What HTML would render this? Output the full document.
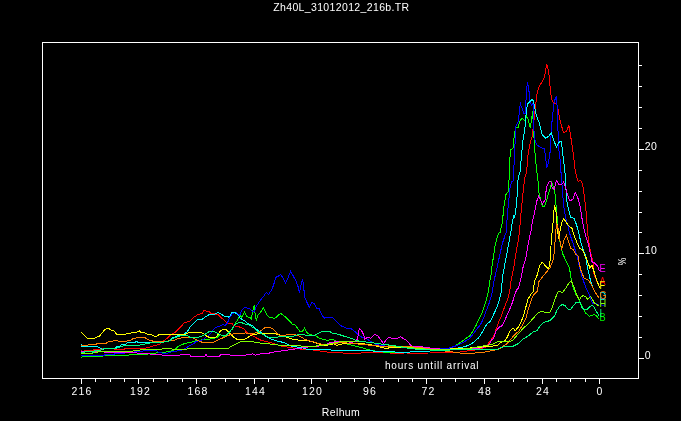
<!DOCTYPE html>
<html><head><meta charset="utf-8"><title>Zh40L_31012012_216b.TR</title>
<style>
html,body{margin:0;padding:0;background:#000;overflow:hidden}
body{width:681px;height:421px}
svg{display:block;will-change:transform}
text{font-family:"Liberation Sans",sans-serif;fill:#fff}
.ax{stroke:#fff;stroke-width:1;fill:none;shape-rendering:crispEdges}
.cv{fill:none;stroke-width:1;shape-rendering:crispEdges;stroke-linejoin:miter}
.t{font-size:10.5px;letter-spacing:0.36px}
.n{font-size:10.5px;letter-spacing:1.15px}
.s{font-size:10px;letter-spacing:0.8px}
.lb{font-size:10.5px}
</style></head>
<body>
<svg width="681" height="421" viewBox="0 0 681 421">
<path class="ax" d="M42.5 42.5H638.5V378.5H42.5Z"/>
<path class="ax" d="M639 358.5h5M639 337.5h3M639 316.5h3M639 295.5h3M639 274.5h3M639 253.5h5M639 232.5h3M639 212.5h3M639 191.5h3M639 170.5h3M639 149.5h5M639 128.5h3M639 107.5h3M639 86.5h3M639 65.5h3"/>
<path class="ax" d="M81.5 379v5M95.5 379v3M110.5 379v3M124.5 379v3M138.5 379v5M153.5 379v3M167.5 379v3M182.5 379v3M196.5 379v5M210.5 379v3M225.5 379v3M239.5 379v3M254.5 379v5M268.5 379v3M282.5 379v3M297.5 379v3M311.5 379v5M326.5 379v3M340.5 379v3M354.5 379v3M369.5 379v5M383.5 379v3M398.5 379v3M412.5 379v3M426.5 379v5M441.5 379v3M455.5 379v3M470.5 379v3M484.5 379v5M498.5 379v3M513.5 379v3M527.5 379v3M542.5 379v5M556.5 379v3M570.5 379v3M585.5 379v3M599.5 379v5"/>
<polyline class="cv" stroke="#ff0000" points="81.0,350.5 83.0,351.5 85.0,350.5 92.0,350.5 95.0,349.5 100.0,349.5 104.0,348.5 107.0,348.5 114.0,349.0 121.0,349.0 123.0,349.5 126.0,348.5 133.0,349.0 140.0,348.5 144.4,348.4 150.0,347.0 155.8,345.3 160.0,344.0 162.8,341.3 167.1,338.5 171.4,334.2 175.7,332.0 179.9,327.8 184.2,322.8 189.9,321.1 194.2,317.1 198.5,314.2 202.0,313.8 203.9,310.3 206.3,311.1 208.5,311.1 211.3,313.8 214.8,313.8 218.4,315.0 221.3,317.8 224.1,319.9 227.0,323.1 231.9,323.5 234.1,325.9 237.6,326.4 241.9,327.8 244.0,328.9 246.8,332.5 251.1,334.6 255.4,337.5 261.1,340.3 266.8,341.7 272.5,343.2 281.0,346.0 289.6,347.4 298.1,348.9 306.7,349.3 315.2,350.3 323.8,351.7 334.0,352.7 336.5,352.4 349.4,353.6 359.3,353.6 362.2,352.4 385.0,352.4 395.0,353.6 402.0,353.6 404.9,352.4 409.2,353.6 418.0,353.1 430.0,353.0 445.0,352.5 460.0,352.0 475.0,350.0 482.0,348.5 486.0,347.0 488.9,342.5 491.8,338.9 494.6,334.6 496.0,329.6 497.5,325.4 498.9,321.1 501.0,316.8 504.5,307.1 507.3,300.0 509.5,292.8 510.9,281.9 513.7,267.6 515.9,253.4 518.0,242.0 519.4,232.0 520.9,214.7 522.3,200.5 523.7,186.2 525.1,176.3 526.6,172.0 528.0,154.7 530.1,143.3 532.3,136.2 533.0,129.1 534.4,116.0 535.8,104.4 537.3,91.6 539.4,85.9 542.2,81.6 544.4,77.4 545.8,68.8 546.8,64.3 547.9,68.8 549.4,77.4 550.1,87.3 551.5,98.7 553.6,103.0 555.8,103.0 557.5,105.9 558.6,113.0 560.7,122.8 563.5,132.7 566.4,131.3 568.9,125.3 570.2,132.7 571.6,142.7 572.8,150.0 574.2,161.7 574.9,168.8 576.3,175.9 578.2,181.6 580.6,180.2 582.0,183.0 583.4,188.7 584.4,197.3 585.6,206.0 586.7,218.5 587.3,228.5 588.4,239.9 589.9,248.4 591.3,255.6 592.7,260.0 594.1,274.5 597.0,281.6 599.3,284.5"/>
<polyline class="cv" stroke="#00ff00" points="81.0,357.5 83.0,356.5 102.0,356.5 104.0,355.5 126.0,355.5 133.0,354.3 144.4,354.8 151.5,353.4 160.0,352.7 165.7,352.0 170.0,351.3 174.2,349.9 178.5,346.3 184.9,343.4 190.6,342.5 196.0,340.5 203.3,339.8 206.5,339.8 209.7,339.0 213.8,338.2 217.0,337.4 219.0,335.4 220.2,334.2 221.8,335.4 224.3,336.6 226.7,336.2 229.1,332.2 231.5,330.5 233.2,327.3 234.4,324.9 236.4,321.7 238.0,319.2 239.8,315.0 241.7,317.6 244.3,312.1 247.1,316.8 250.0,317.6 251.4,319.0 252.5,311.9 254.2,305.0 255.4,316.1 256.4,320.4 257.8,315.4 259.9,313.3 263.5,307.6 266.4,314.0 269.2,317.3 274.9,318.3 280.6,313.3 285.3,316.8 289.6,321.1 292.4,324.2 295.3,325.1 299.6,331.1 302.4,331.4 304.5,328.2 306.7,332.5 309.5,334.6 315.2,335.6 319.5,338.2 323.8,339.6 328.0,340.3 332.3,339.3 336.5,341.3 342.2,342.5 349.4,344.6 356.5,346.5 363.6,348.2 370.7,350.3 379.3,351.7 387.8,352.4 399.2,352.4 407.8,352.1 418.0,351.7 430.0,351.0 440.0,350.0 446.2,348.9 454.7,346.0 460.4,342.5 466.1,338.2 469.7,336.0 473.3,330.4 476.1,325.4 479.0,319.0 481.8,313.3 483.9,307.6 486.7,298.5 488.5,291.0 489.5,283.3 491.0,274.7 492.4,263.3 493.8,254.8 495.2,244.8 497.4,236.3 499.5,232.0 500.2,232.0 502.4,221.9 503.8,207.6 505.9,194.8 508.1,191.9 509.0,180.5 509.5,172.0 509.5,161.9 510.9,149.7 513.0,148.3 513.7,140.5 514.5,133.4 515.9,127.7 518.0,127.7 520.2,120.5 522.3,118.4 525.1,121.3 526.6,116.3 528.0,119.1 530.1,127.7 531.6,120.5 532.5,111.0 533.7,129.1 534.1,140.5 535.1,154.7 536.5,169.0 538.0,180.5 538.7,191.9 540.8,200.5 542.2,206.2 544.4,206.9 546.5,200.5 548.6,193.4 550.8,186.2 551.5,181.3 553.6,187.7 555.1,194.8 556.1,206.2 556.9,214.7 557.9,226.1 558.3,232.8 559.9,241.3 561.4,248.4 562.8,254.1 564.9,258.4 566.4,261.7 569.2,267.4 570.6,274.5 571.3,280.9 573.5,288.1 575.8,294.3 578.4,298.6 580.5,302.8 582.7,308.0 585.7,313.1 589.1,316.1 592.1,315.7 594.2,314.4 596.8,316.1 599.3,319.5"/>
<polyline class="cv" stroke="#0000ff" points="81.0,355.5 104.0,355.5 105.0,354.5 114.0,354.5 115.0,353.5 125.0,353.0 143.0,351.0 155.8,350.3 158.6,352.5 166.0,353.5 171.4,352.0 177.0,351.0 182.8,349.9 188.5,346.3 194.2,343.4 196.0,341.4 200.0,340.5 203.3,339.8 205.7,337.4 208.9,335.4 212.2,331.3 214.6,328.1 217.8,326.5 220.2,326.1 222.7,324.5 225.1,325.3 227.1,323.3 228.3,320.8 229.5,318.4 230.7,316.0 232.6,313.5 234.8,312.1 237.6,313.5 239.0,315.7 240.0,314.7 241.4,310.4 244.3,307.6 249.3,308.3 252.8,311.9 254.2,311.9 256.4,306.2 260.7,299.7 264.2,295.5 266.4,292.2 268.5,294.5 271.3,290.5 273.5,285.5 275.6,277.4 278.5,276.0 280.6,274.5 282.7,277.7 285.6,282.7 288.4,277.0 290.6,271.3 292.7,274.8 296.3,281.9 298.4,287.6 299.5,293.3 301.3,283.4 302.7,279.4 303.7,287.6 304.8,297.6 307.0,302.6 309.4,307.3 311.9,302.6 314.1,303.3 316.9,308.3 319.1,308.7 321.9,314.7 324.0,318.3 325.5,317.3 332.3,317.5 336.5,321.8 341.5,326.1 346.5,328.2 350.8,328.5 354.4,331.1 357.9,334.2 362.2,337.5 366.5,338.9 370.7,341.3 376.4,344.6 385.0,346.0 393.5,346.5 402.1,346.5 410.6,346.7 418.0,348.2 430.0,349.0 440.0,349.0 449.0,348.2 457.6,345.3 463.3,342.5 469.0,338.9 473.3,333.9 477.5,328.2 480.3,324.9 483.1,319.2 486.0,311.4 488.8,304.2 491.0,297.1 492.4,291.0 493.8,281.9 496.7,269.0 499.5,256.2 502.4,243.4 505.2,234.8 506.4,232.0 507.3,214.7 508.8,200.5 510.2,186.2 511.6,182.0 513.3,180.5 513.7,172.0 514.5,154.7 515.2,140.5 515.9,126.2 518.0,122.0 519.4,112.0 519.4,108.7 520.4,103.7 521.6,107.3 523.7,113.0 525.1,113.0 526.1,98.7 526.6,90.2 527.3,82.4 528.4,86.6 529.4,94.5 530.1,101.6 531.6,105.1 533.0,103.0 533.7,116.0 533.7,126.2 534.4,137.6 536.5,144.8 540.1,146.9 544.4,149.0 545.8,159.0 546.8,167.6 548.6,161.9 550.1,151.9 550.8,140.5 551.5,126.2 552.8,114.2 554.2,101.4 556.4,96.4 557.1,105.7 557.8,125.6 558.8,150.0 559.9,157.4 560.7,168.8 561.7,180.2 562.5,191.6 563.6,206.0 565.6,217.1 567.8,225.6 569.9,234.2 572.8,242.7 575.6,251.3 577.3,257.0 579.2,266.0 581.3,274.5 584.2,283.1 587.0,290.2 589.5,295.1 591.2,300.3 592.9,303.3 595.9,303.7 598.5,305.0 599.3,305.0"/>
<polyline class="cv" stroke="#00ffff" points="81.0,344.5 81.7,346.1 85.3,346.5 97.0,346.5 99.0,347.5 101.0,348.5 103.0,349.5 105.0,348.5 115.0,348.1 117.3,346.3 119.4,346.3 121.6,344.4 125.1,344.4 128.0,342.5 135.1,342.5 136.5,341.3 138.0,342.5 151.5,342.5 153.6,341.3 160.0,342.0 162.8,341.3 168.5,341.3 172.8,337.7 178.5,335.6 183.5,334.2 187.0,332.0 190.6,326.4 194.2,322.8 197.7,319.2 201.3,319.9 205.6,316.8 209.9,314.2 214.8,314.2 217.7,312.5 221.3,314.2 224.8,316.4 229.1,317.1 231.9,312.8 234.1,312.1 237.6,314.2 240.5,318.5 244.0,320.4 248.3,323.9 252.5,325.4 256.8,329.6 262.5,333.2 266.8,337.0 272.5,339.6 278.2,341.3 283.9,342.5 288.2,344.6 292.4,346.5 301.0,347.4 306.7,349.3 318.1,349.3 329.5,349.6 333.7,350.7 370.7,350.7 377.9,351.7 392.1,351.7 399.2,352.4 418.0,351.7 430.0,351.0 445.0,350.0 455.0,348.5 464.7,346.7 470.4,344.6 474.7,341.3 478.2,338.2 480.3,335.6 483.1,330.6 486.7,324.2 490.2,321.3 493.1,315.6 496.7,307.8 498.8,302.1 500.2,296.4 501.5,291.0 502.4,277.6 504.5,266.2 506.6,254.8 508.8,243.4 510.2,234.8 510.9,232.0 512.3,221.9 513.7,216.2 514.7,217.6 515.9,209.0 517.3,193.4 518.0,180.5 519.4,173.4 520.2,172.0 521.3,157.6 523.0,140.5 525.1,126.2 525.9,116.3 527.3,104.4 529.4,101.9 532.3,99.4 533.7,101.6 534.4,105.9 535.8,113.0 537.3,117.7 539.4,123.4 542.2,134.8 545.8,138.4 548.6,136.2 551.5,132.7 553.6,140.5 556.5,146.9 559.3,141.9 561.5,141.9 562.9,154.7 564.5,167.4 565.4,177.3 565.9,188.7 566.8,200.1 567.4,206.0 568.5,208.5 570.6,217.1 574.2,218.5 576.3,224.2 578.5,231.3 580.6,241.3 582.7,248.4 584.9,254.1 586.3,260.0 586.7,263.1 588.4,271.7 590.1,278.8 592.7,287.3 595.6,293.0 598.4,297.3 599.5,298.5"/>
<polyline class="cv" stroke="#ff00ff" points="81.0,351.5 104.0,351.5 105.0,352.9 133.0,352.4 140.0,353.4 150.0,354.0 158.6,354.8 166.0,355.3 190.0,354.8 190.6,356.0 205.0,356.0 205.5,354.8 206.5,354.8 207.0,356.0 219.8,356.0 220.5,354.8 244.0,355.3 252.5,353.9 255.4,355.3 258.2,354.1 266.8,353.6 275.3,351.7 283.9,350.7 292.4,349.3 301.0,348.2 311.0,346.5 319.5,346.0 326.6,344.6 330.0,342.5 336.5,341.7 345.1,341.7 352.2,342.2 356.5,341.0 357.9,336.8 359.3,328.5 361.5,330.4 363.6,334.6 364.8,339.3 367.2,337.5 370.7,338.2 375.0,334.2 377.9,336.0 380.7,339.6 383.6,343.6 386.4,339.6 388.5,337.5 395.0,338.9 397.8,338.2 400.6,336.5 403.5,338.9 406.3,340.3 412.0,346.5 420.0,346.5 425.0,347.5 440.0,349.0 460.0,349.5 478.0,348.5 486.1,346.5 489.6,343.9 491.7,339.9 493.2,338.9 495.9,331.3 498.8,327.3 502.4,325.6 505.9,317.8 509.5,309.9 512.3,302.8 514.5,295.7 516.6,290.0 518.7,287.6 520.9,279.0 523.0,267.6 525.9,257.6 528.0,244.8 530.1,234.8 530.8,232.0 532.3,221.9 534.4,213.3 536.5,201.9 538.7,196.2 540.8,200.5 542.5,204.0 545.0,200.1 546.5,187.5 549.3,181.6 550.8,181.3 552.2,187.7 554.3,189.1 555.5,183.4 556.9,180.5 558.6,184.1 561.5,184.8 563.6,182.0 565.6,187.3 567.8,195.9 569.9,200.8 572.8,199.4 575.3,192.3 577.7,197.3 579.2,203.0 580.6,208.5 582.0,218.5 583.9,228.5 585.9,237.0 588.4,244.2 590.1,252.7 592.0,261.7 594.8,263.1 597.7,266.0 599.3,271.0"/>
<polyline class="cv" stroke="#ffff00" points="81.0,332.0 87.4,338.5 94.5,338.5 97.4,336.6 99.5,336.3 102.4,332.5 105.2,329.2 108.0,328.2 110.9,329.9 113.7,330.6 116.6,334.2 125.9,334.2 128.0,333.0 130.8,333.0 132.3,332.0 137.3,332.0 139.4,330.9 140.8,332.5 144.4,332.5 147.2,334.2 150.8,334.2 154.3,336.3 156.5,336.3 158.6,334.9 162.2,334.2 185.6,334.2 188.5,332.5 201.3,332.5 204.2,334.2 207.7,336.8 211.3,337.7 215.6,337.3 218.4,334.2 220.5,330.6 223.4,329.2 226.2,329.9 228.4,332.0 231.2,334.9 234.1,337.7 237.6,339.6 244.0,339.6 246.9,338.2 249.5,336.3 252.5,334.6 258.2,333.9 266.8,333.9 269.6,333.2 273.9,333.2 278.2,334.6 283.9,336.5 289.6,338.2 295.3,339.9 303.8,340.3 309.5,341.0 315.2,342.5 320.9,344.6 326.6,345.3 334.0,343.9 336.5,345.3 342.2,343.9 356.5,343.2 370.7,344.6 385.0,348.2 399.2,347.4 418.0,348.2 430.0,349.0 450.0,349.0 470.0,348.0 490.2,346.3 497.4,345.6 500.2,342.7 504.5,341.3 507.3,337.0 510.2,330.6 513.0,328.2 515.2,330.6 518.7,326.8 521.6,320.6 524.4,312.8 526.6,304.2 528.0,299.3 530.8,294.3 533.0,292.0 534.4,281.9 537.3,274.7 539.4,266.2 542.2,262.2 545.8,266.2 548.6,269.0 550.1,260.5 550.8,249.1 551.5,237.7 552.9,224.7 553.6,213.3 554.6,205.0 556.0,211.4 556.8,221.4 557.8,231.3 558.5,238.5 559.9,231.3 562.1,221.4 563.9,218.5 566.4,222.8 569.2,226.4 572.1,228.5 574.2,235.6 577.0,242.7 579.9,248.4 582.7,249.9 584.9,255.6 586.3,258.0 587.7,261.7 589.9,268.1 592.0,265.3 594.1,271.7 596.3,278.8 598.4,284.5 599.5,288.0"/>
<polyline class="cv" stroke="#ff8000" points="81.0,345.0 83.1,345.4 87.4,345.4 88.8,344.4 95.9,344.4 97.4,343.4 105.9,343.4 108.8,341.6 111.6,341.6 114.5,340.3 117.3,340.3 118.7,341.3 126.6,341.3 128.7,340.3 130.8,340.3 133.7,338.2 135.8,338.2 137.3,337.3 144.4,337.3 147.2,339.2 149.4,340.3 151.5,340.3 152.9,341.3 166.0,341.3 174.2,340.2 178.5,338.5 185.6,337.3 190.6,337.3 194.2,338.5 198.5,340.6 202.7,342.5 207.0,342.7 213.4,342.5 217.0,340.6 221.3,338.5 225.5,336.8 229.8,334.9 235.5,333.5 245.5,333.0 252.5,333.9 256.8,332.5 261.1,330.4 265.4,327.5 269.6,327.5 273.9,329.6 276.8,333.2 279.6,335.3 283.9,335.6 289.6,334.2 295.3,334.6 301.0,337.0 305.3,339.6 311.0,341.3 318.1,343.2 323.8,344.6 330.0,344.0 342.2,342.5 356.5,343.9 370.7,345.3 385.0,346.5 399.2,346.0 418.0,347.4 430.0,349.0 445.0,351.0 464.7,353.6 475.0,353.0 483.2,352.4 491.8,350.7 498.8,349.1 503.1,346.3 506.6,344.1 510.2,339.9 514.5,334.9 518.7,331.3 522.3,325.6 525.9,318.5 528.0,309.9 530.8,301.4 533.0,295.7 537.3,291.4 538.7,281.9 542.9,276.2 547.2,271.2 550.1,267.6 552.9,260.5 554.3,251.9 555.1,240.5 555.8,232.0 556.4,224.2 557.8,227.1 559.2,237.0 560.7,244.2 561.7,249.9 563.5,241.3 566.4,235.6 568.5,241.3 570.6,248.4 573.5,249.9 575.6,254.1 578.2,256.0 579.2,263.1 581.3,271.7 584.2,278.1 588.4,280.2 591.3,284.5 594.1,290.2 597.0,295.2 599.5,298.5"/>
<polyline class="cv" stroke="#80ff00" points="81.0,353.5 92.0,353.5 93.0,352.5 97.0,352.5 98.0,351.5 130.0,351.5 140.0,350.0 160.0,349.6 164.3,348.4 171.4,348.4 173.5,349.9 185.6,349.9 188.5,348.4 228.4,348.4 231.2,346.3 235.5,344.2 239.8,342.0 244.0,341.0 252.5,341.7 261.1,343.2 272.5,344.2 279.6,345.3 291.0,345.6 301.0,346.0 311.0,346.5 320.9,345.6 329.5,343.9 334.0,343.0 342.2,341.3 356.5,341.0 370.7,342.5 385.0,344.6 399.2,346.7 418.0,348.4 430.0,349.5 450.0,350.0 470.0,348.5 480.0,346.5 490.2,344.8 494.5,343.4 498.8,341.3 504.5,341.3 508.8,342.0 513.0,339.9 517.3,334.9 523.0,328.5 528.7,323.5 533.0,318.5 537.3,313.5 541.5,311.4 545.8,312.5 550.1,312.1 552.9,305.7 555.8,297.1 558.2,291.5 562.8,292.3 566.4,287.3 569.2,282.4 571.3,280.9 573.5,285.9 575.6,291.6 577.5,296.8 579.7,299.8 581.4,296.4 583.5,295.6 585.7,296.8 587.8,299.4 590.4,296.4 592.5,299.4 594.2,302.8 596.8,304.5 599.3,306.3"/>
<polyline class="cv" stroke="#00ff80" points="81.0,352.5 84.7,352.5 85.0,351.5 92.0,351.5 93.0,352.5 95.0,350.5 100.0,350.5 104.0,348.5 116.0,348.5 121.0,346.5 125.0,345.5 140.0,345.0 150.0,343.0 160.0,342.5 168.0,341.5 173.0,338.5 178.0,336.5 184.0,335.0 187.0,335.5 190.0,337.4 196.0,337.8 200.0,336.6 203.3,335.4 206.5,333.4 209.7,331.3 213.0,331.3 216.2,332.6 219.4,334.2 221.8,335.4 225.9,335.4 228.3,333.4 230.7,330.5 233.2,327.3 234.8,324.5 238.0,322.9 241.2,322.5 244.5,323.7 246.0,324.5 249.7,325.1 254.0,328.2 258.2,331.8 262.5,334.2 268.2,337.0 275.3,337.5 281.0,336.5 292.4,336.5 298.1,334.6 306.7,335.1 311.0,336.0 315.2,335.1 319.5,332.5 323.8,331.1 329.5,331.3 332.3,333.2 338.0,334.2 345.1,336.5 350.8,338.2 356.5,340.7 363.6,341.7 370.7,342.5 377.9,343.6 385.0,344.6 392.1,345.3 399.2,346.7 407.8,348.2 418.0,349.3 430.0,350.0 450.0,350.0 476.0,349.1 497.4,349.1 503.1,347.0 513.0,346.3 518.7,343.4 523.0,339.1 528.7,335.6 533.0,332.0 537.3,330.6 540.1,325.6 544.4,322.1 550.1,320.6 554.3,316.4 557.1,310.1 560.0,305.8 562.6,304.5 565.1,305.8 568.1,309.2 570.7,309.2 573.3,305.8 575.8,302.8 580.1,302.8 581.8,307.1 584.4,309.7 587.4,309.2 589.9,306.7 592.5,305.4 594.6,308.0 596.8,312.2 599.3,316.1"/>
<text class="lb" transform="translate(599.6 285) scale(0.88 1)" style="fill:#ff0000">A</text>
<text class="lb" transform="translate(599.6 320.5) scale(0.88 1)" style="fill:#00ff00">B</text>
<text class="lb" transform="translate(599.6 305.5) scale(0.88 1)" style="fill:#0000ff">C</text>
<text class="lb" transform="translate(599.6 299.5) scale(0.88 1)" style="fill:#00ffff">D</text>
<text class="lb" transform="translate(599.6 272) scale(0.88 1)" style="fill:#ff00ff">E</text>
<text class="lb" transform="translate(599.6 288.5) scale(0.88 1)" style="fill:#ffff00">F</text>
<text class="lb" transform="translate(599.6 298.8) scale(0.88 1)" style="fill:#ff8000">G</text>
<text class="lb" transform="translate(599.6 307) scale(0.88 1)" style="fill:#80ff00">H</text>
<text class="lb" transform="translate(599.6 317) scale(0.88 1)" style="fill:#00ff80">I</text>
<text class="n" x="82.07" y="395" text-anchor="middle">216</text>
<text class="n" x="140.57" y="395" text-anchor="middle">192</text>
<text class="n" x="198.07" y="395" text-anchor="middle">168</text>
<text class="n" x="255.57" y="395" text-anchor="middle">144</text>
<text class="n" x="312.57" y="395" text-anchor="middle">120</text>
<text class="n" x="370.07" y="395" text-anchor="middle">96</text>
<text class="n" x="428.57" y="395" text-anchor="middle">72</text>
<text class="n" x="485.07" y="395" text-anchor="middle">48</text>
<text class="n" x="543.07" y="395" text-anchor="middle">24</text>
<text class="n" x="600.07" y="395" text-anchor="middle">0</text>
<text class="n" x="644.8" y="150" style="letter-spacing:0.4px">20</text>
<text class="n" x="644.8" y="254" style="letter-spacing:0.4px">10</text>
<text class="n" x="644.8" y="359" style="letter-spacing:0.4px">0</text>
<text class="t" x="341.4" y="10.6" text-anchor="middle">Zh40L_31012012_216b.TR</text>
<text class="t" x="341" y="416" text-anchor="middle">Relhum</text>
<text class="s" x="385" y="368.5">hours untill arrival</text>
<text class="t" transform="translate(617.9 261.6) rotate(90) scale(0.74 1)" text-anchor="middle" style="font-size:11.5px;letter-spacing:0">%</text>
</svg>
</body></html>
